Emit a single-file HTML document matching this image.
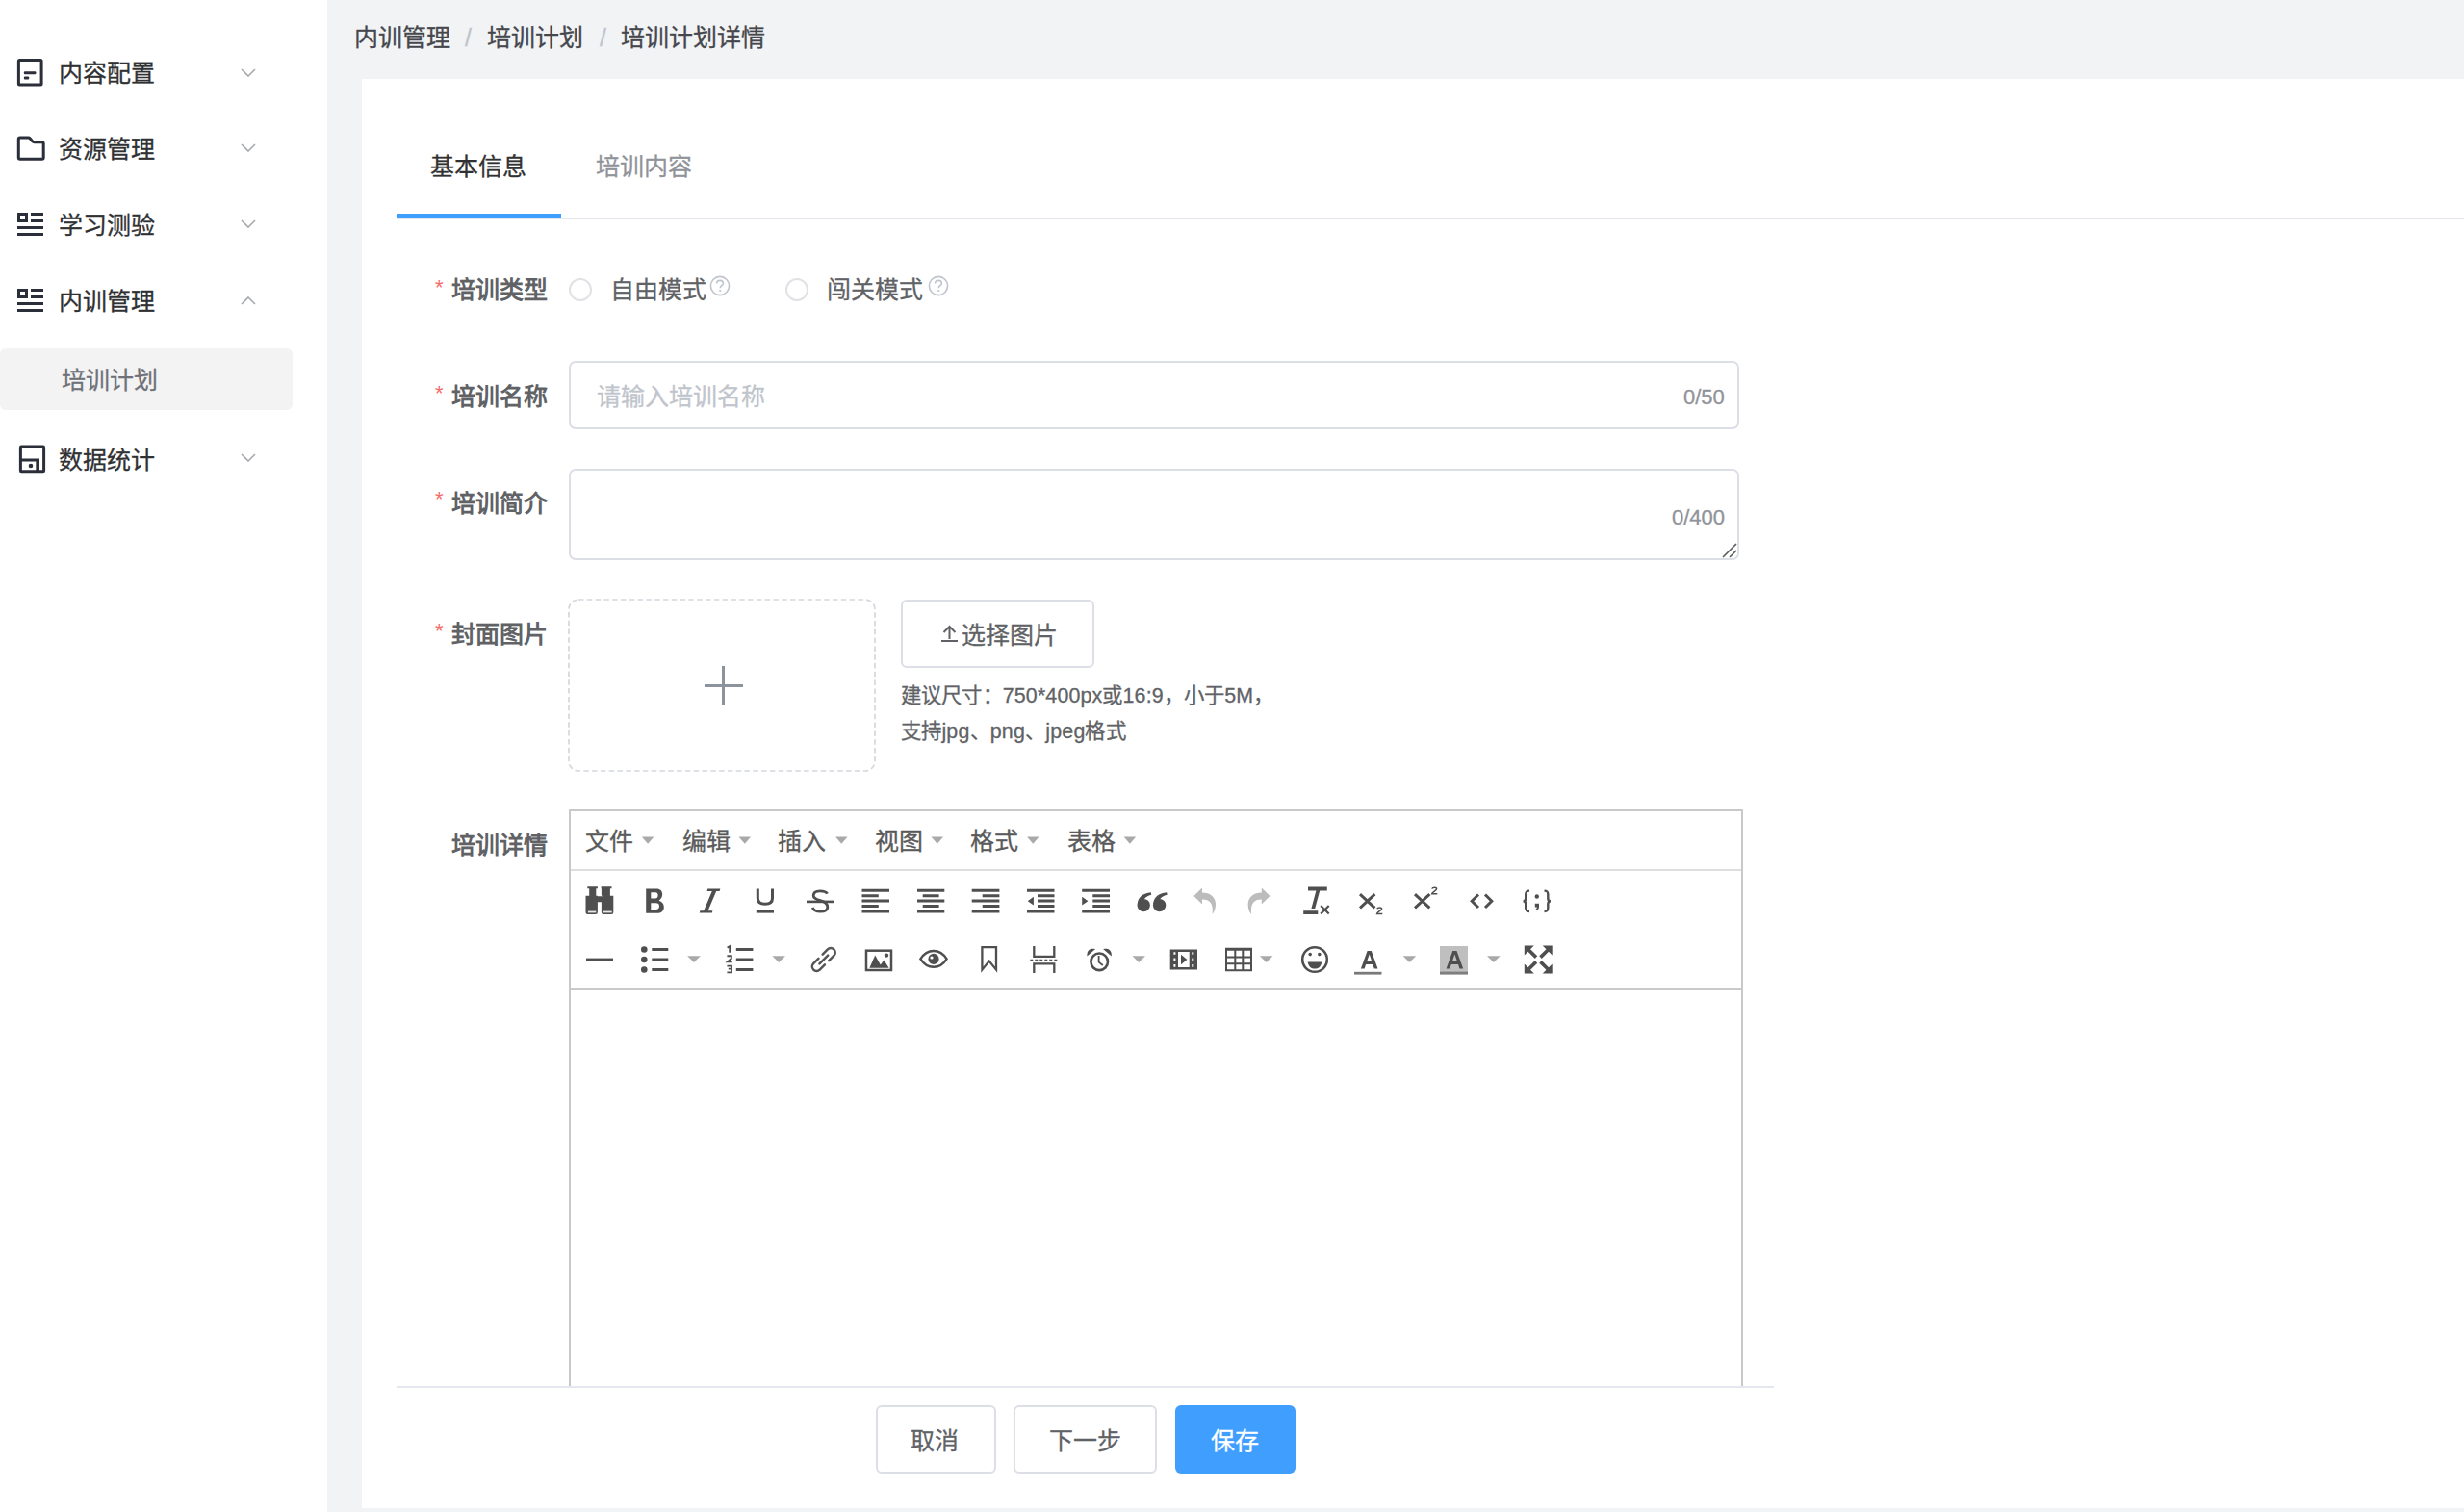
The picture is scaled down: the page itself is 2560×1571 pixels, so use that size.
<!DOCTYPE html>
<html lang="zh-CN"><head><meta charset="utf-8">
<style>
html,body{margin:0;padding:0;}
body{width:2560px;height:1571px;overflow:hidden;position:relative;background:#f2f3f5;font-family:"Liberation Sans",sans-serif;}
.a{position:absolute;}
.t{position:absolute;white-space:nowrap;font-size:25px;line-height:27px;-webkit-text-stroke:0.3px currentColor;}
#side{position:absolute;left:0;top:0;width:340px;height:1571px;background:#fff;}
#card{position:absolute;left:376px;top:82px;width:2184px;height:1485px;background:#fff;}
.nav{color:#303133;}
.chev{position:absolute;width:16px;height:9px;}
.lbl{font-weight:bold;color:#606266;-webkit-text-stroke:0;}
.req{position:absolute;color:#f56c6c;font-size:22px;line-height:22px;}
.inp{position:absolute;border:2px solid #dcdfe6;border-radius:7px;box-sizing:border-box;background:#fff;}
.btn{position:absolute;border:2px solid #dcdfe6;border-radius:6px;box-sizing:border-box;background:#fff;}
</style></head><body>

<!-- SIDEBAR -->
<div id="side">
  <!-- row1 -->
  <svg class="a" style="left:17px;top:60px" width="30" height="30" viewBox="0 0 30 30"><rect x="2.4" y="2.4" width="23.7" height="25.5" rx="1" fill="none" stroke="#2b2f3a" stroke-width="3"/><rect x="7.9" y="14.3" width="12.5" height="3" rx="1" fill="#2b2f3a"/><rect x="7.9" y="19.6" width="5.3" height="3" rx="1" fill="#2b2f3a"/></svg>
  <div class="t nav" style="left:61px;top:63px">内容配置</div>
  <svg class="chev" style="left:250px;top:71px" viewBox="0 0 16 9"><path d="M1 1 L8 8 L15 1" fill="none" stroke="#a6a9ad" stroke-width="1.6"/></svg>
  <!-- row2 -->
  <svg class="a" style="left:17px;top:140px" width="31" height="28" viewBox="0 0 31 28"><path d="M2.3 4.6 Q2.3 3.1 3.8 3.1 H12.5 Q13.5 3.1 14.4 4 L16.6 6.8 Q17.5 7.7 18.6 7.7 H26.7 Q28.2 7.7 28.2 9.2 V23.7 Q28.2 25.2 26.7 25.2 H3.8 Q2.3 25.2 2.3 23.7 Z" fill="none" stroke="#2b2f3a" stroke-width="3"/></svg>
  <div class="t nav" style="left:61px;top:142px">资源管理</div>
  <svg class="chev" style="left:250px;top:149px" viewBox="0 0 16 9"><path d="M1 1 L8 8 L15 1" fill="none" stroke="#a6a9ad" stroke-width="1.6"/></svg>
  <!-- row3 -->
  <svg class="a" style="left:17px;top:220px" width="30" height="27" viewBox="0 0 30 27"><rect x="2.5" y="2.5" width="8" height="7" fill="none" stroke="#2b2f3a" stroke-width="3"/><rect x="15" y="1" width="13" height="3" fill="#2b2f3a"/><rect x="15" y="8" width="13" height="3" fill="#2b2f3a"/><rect x="1" y="15" width="27" height="3" fill="#2b2f3a"/><rect x="1" y="22" width="27" height="3" fill="#2b2f3a"/></svg>
  <div class="t nav" style="left:61px;top:221px">学习测验</div>
  <svg class="chev" style="left:250px;top:228px" viewBox="0 0 16 9"><path d="M1 1 L8 8 L15 1" fill="none" stroke="#a6a9ad" stroke-width="1.6"/></svg>
  <!-- row4 -->
  <svg class="a" style="left:17px;top:299px" width="30" height="27" viewBox="0 0 30 27"><rect x="2.5" y="2.5" width="8" height="7" fill="none" stroke="#2b2f3a" stroke-width="3"/><rect x="15" y="1" width="13" height="3" fill="#2b2f3a"/><rect x="15" y="8" width="13" height="3" fill="#2b2f3a"/><rect x="1" y="15" width="27" height="3" fill="#2b2f3a"/><rect x="1" y="22" width="27" height="3" fill="#2b2f3a"/></svg>
  <div class="t nav" style="left:61px;top:300px">内训管理</div>
  <svg class="chev" style="left:250px;top:308px" viewBox="0 0 16 9"><path d="M1 8 L8 1 L15 8" fill="none" stroke="#a6a9ad" stroke-width="1.6"/></svg>
  <!-- submenu -->
  <div class="a" style="left:0;top:362px;width:304px;height:64px;background:#f3f3f3;border-radius:6px"></div>
  <div class="t" style="left:64px;top:382px;color:#6e7178">培训计划</div>
  <!-- row5 -->
  <svg class="a" style="left:19px;top:462px" width="30" height="30" viewBox="0 0 30 30"><rect x="2.4" y="2.1" width="24.2" height="25.6" rx="0.8" fill="none" stroke="#2b2f3a" stroke-width="3"/><path d="M2.4 16.1 H19.8 V27.7" fill="none" stroke="#2b2f3a" stroke-width="3"/><circle cx="13" cy="22" r="2.3" fill="#2b2f3a"/></svg>
  <div class="t nav" style="left:61px;top:465px">数据统计</div>
  <svg class="chev" style="left:250px;top:471px" viewBox="0 0 16 9"><path d="M1 1 L8 8 L15 1" fill="none" stroke="#a6a9ad" stroke-width="1.6"/></svg>
</div>

<!-- BREADCRUMB -->
<div class="t" style="left:368px;top:26px;color:#45474d">内训管理</div>
<div class="t" style="left:483px;top:26px;color:#c0c4cc">/</div>
<div class="t" style="left:506px;top:26px;color:#45474d">培训计划</div>
<div class="t" style="left:623px;top:26px;color:#c0c4cc">/</div>
<div class="t" style="left:645px;top:26px;color:#45474d">培训计划详情</div>

<!-- CARD -->
<div id="card"></div>

<!-- TABS -->
<div class="t" style="left:447px;top:160px;color:#303133">基本信息</div>
<div class="t" style="left:619px;top:160px;color:#909399">培训内容</div>
<div class="a" style="left:412px;top:226px;width:2148px;height:2px;background:#e4e7ed"></div>
<div class="a" style="left:412px;top:222px;width:171px;height:4px;background:#409eff"></div>

<!-- FORM -->
<!-- row1 type -->
<div class="req" style="left:452px;top:288px">*</div>
<div class="t lbl" style="left:469px;top:288px">培训类型</div>
<div class="a" style="left:591px;top:289px;width:24px;height:24px;border:2px solid #e0e2e6;border-radius:50%;box-sizing:border-box"></div>
<div class="t" style="left:634px;top:288px;color:#606266">自由模式</div>
<svg class="a" style="left:737px;top:286px" width="22" height="22" viewBox="0 0 22 22"><circle cx="11" cy="11" r="9.6" fill="none" stroke="#c0c4cc" stroke-width="1.6"/><path d="M7.6 8.6 C7.6 6.4 9.2 5.4 11 5.4 C12.9 5.4 14.4 6.6 14.4 8.4 C14.4 10.6 11.2 10.8 11.2 13.2" fill="none" stroke="#c0c4cc" stroke-width="1.6"/><circle cx="11.2" cy="16" r="1.1" fill="#c0c4cc"/></svg>
<div class="a" style="left:816px;top:289px;width:24px;height:24px;border:2px solid #e0e2e6;border-radius:50%;box-sizing:border-box"></div>
<div class="t" style="left:859px;top:288px;color:#606266">闯关模式</div>
<svg class="a" style="left:964px;top:286px" width="22" height="22" viewBox="0 0 22 22"><circle cx="11" cy="11" r="9.6" fill="none" stroke="#c0c4cc" stroke-width="1.6"/><path d="M7.6 8.6 C7.6 6.4 9.2 5.4 11 5.4 C12.9 5.4 14.4 6.6 14.4 8.4 C14.4 10.6 11.2 10.8 11.2 13.2" fill="none" stroke="#c0c4cc" stroke-width="1.6"/><circle cx="11.2" cy="16" r="1.1" fill="#c0c4cc"/></svg>

<!-- row2 name -->
<div class="req" style="left:452px;top:398px">*</div>
<div class="t lbl" style="left:469px;top:399px">培训名称</div>
<div class="inp" style="left:591px;top:375px;width:1216px;height:71px"></div>
<div class="t" style="left:620px;top:399px;color:#c0c4cc">请输入培训名称</div>
<div class="t" style="left:1749px;top:402px;font-size:22px;line-height:22px;color:#909399">0/50</div>

<!-- row3 intro -->
<div class="req" style="left:452px;top:508px">*</div>
<div class="t lbl" style="left:469px;top:510px">培训简介</div>
<div class="inp" style="left:591px;top:487px;width:1216px;height:95px"></div>
<div class="t" style="left:1737px;top:527px;font-size:22px;line-height:22px;color:#909399">0/400</div>
<svg class="a" style="left:1788px;top:563px" width="18" height="17" viewBox="0 0 18 17"><path d="M2 16 L16 2 M9 16 L16 9" stroke="#5a5a5a" stroke-width="1.6"/></svg>

<!-- row4 cover -->
<div class="req" style="left:452px;top:645px">*</div>
<div class="t lbl" style="left:469px;top:646px">封面图片</div>
<svg class="a" style="left:590px;top:622px" width="320" height="181"><rect x="1" y="1" width="318" height="178" rx="10" fill="#fff" stroke="#d4d7dd" stroke-width="1.7" stroke-dasharray="5.5 3.3"/></svg>
<div class="a" style="left:732px;top:711px;width:40px;height:3px;background:#8c939d"></div>
<div class="a" style="left:750px;top:692px;width:3px;height:41px;background:#8c939d"></div>
<div class="btn" style="left:936px;top:623px;width:201px;height:71px"></div>
<svg class="a" style="left:977px;top:647px" width="19" height="21" viewBox="0 0 19 21"><path d="M9.5 4 V17 M3.5 10 L9.5 4 L15.5 10" fill="none" stroke="#606266" stroke-width="2"/><rect x="1" y="18" width="17" height="2" fill="#606266"/></svg>
<div class="t" style="left:999px;top:647px;color:#606266">选择图片</div>
<div class="t" style="left:936px;top:713px;font-size:21.4px;line-height:21px;letter-spacing:0.15px;color:#606266">建议尺寸：750*400px或16:9，小于5M，</div>
<div class="t" style="left:936px;top:750px;font-size:21.4px;line-height:21px;letter-spacing:0.2px;color:#606266">支持jpg、png、jpeg格式</div>

<!-- row5 editor -->
<div class="t lbl" style="left:469px;top:865px">培训详情</div>
<div id="ed" class="a" style="left:591px;top:841px;width:1220px;height:600px;border:2px solid #c9c9c9;border-bottom:none;box-sizing:border-box;background:#fff"></div>
<div class="a" style="left:593px;top:903px;width:1216px;height:2px;background:#dedede"></div>
<div class="a" style="left:593px;top:1027px;width:1216px;height:2px;background:#c9c9c9"></div>
<div class="t" style="left:608px;top:861px;color:#5a5a5a">文件</div>
<div class="t" style="left:709px;top:861px;color:#5a5a5a">编辑</div>
<div class="t" style="left:808px;top:861px;color:#5a5a5a">插入</div>
<div class="t" style="left:909px;top:861px;color:#5a5a5a">视图</div>
<div class="t" style="left:1008px;top:861px;color:#5a5a5a">格式</div>
<div class="t" style="left:1109px;top:861px;color:#5a5a5a">表格</div>
<svg class="a" style="left:0;top:0" width="2560" height="1571" viewBox="0 0 2560 1571">
<g fill="#4f4f4f">
<!-- menubar carets -->
<path d="M666.8 869.5 H679.4 L673.1 876.8 Z M767.5 869.5 H780.1 L773.8 876.8 Z M868 869.5 H880.6 L874.3 876.8 Z M967.5 869.5 H980.1 L973.8 876.8 Z M1067 869.5 H1079.6 L1073.3 876.8 Z M1167.6 869.5 H1180.2 L1173.9 876.8 Z" fill="#a9a9a9"/>
<!-- binoculars -->
<path d="M610.3 921.3 H620.9 V923.3 H619.3 V930.8 H620.9 V931.3 H626.5 V930.8 H624.9 V923.3 H624.6 V921.3 H635.5 V923.3 H633.9 V930.8 H637.3 V948 Q637.3 950.1 635.3 950.1 H626.9 Q624.9 950.1 624.9 948 V937.2 H620.9 V948 Q620.9 950.1 618.9 950.1 H610.5 Q608.5 950.1 608.5 948 V930.8 H612.2 V923.3 H610.3 Z"/>
<rect x="610.9" y="946.6" width="8.4" height="1.8" fill="#e8e8e8"/>
<rect x="626.8" y="946.6" width="8.9" height="1.8" fill="#e8e8e8"/>
<!-- B -->
<path fill-rule="evenodd" d="M671.2 923.4 H682.2 C686 923.4 688.2 925.6 688.2 929.2 C688.2 932.2 686.6 934.2 684.6 935.8 C687.8 936.8 689.8 939.2 689.8 942.4 C689.8 946.6 687 948.8 682.6 948.8 H671.2 Z M676.3 927.3 H681 C682.8 927.3 683.6 928.4 683.6 930.3 C683.6 932.4 682.6 933.6 680.8 933.6 H676.3 Z M676.3 938.3 H681.6 C683.8 938.3 685 939.4 685 941.6 C685 943.8 683.8 945 681.6 945 H676.3 Z"/>
<!-- I -->
<path d="M735.2 923.6 H748.3 L747.6 926 H734.6 Z M727.4 946.2 H740.4 L739.8 948.6 H726.7 Z M739.8 926 H744.2 L735.6 946.2 H731.2 Z"/>
<!-- U -->
<path d="M787.3 923.6 V933.2 C787.3 937.6 790 939.3 794.9 939.3 C799.8 939.3 802.5 937.6 802.5 933.2 V923.6" fill="none" stroke="#4f4f4f" stroke-width="3"/>
<rect x="785.8" y="945.2" width="18.2" height="3.4"/>
<!-- S -->
<path d="M859.6 928.6 C858.2 926 855.4 925.8 852 925.8 C847.4 925.8 845.2 927.8 845.2 930.6 C845.2 933.6 847.8 934.6 852.2 935.6 C857.4 936.8 859.8 938.8 859.8 942.6 C859.8 945.8 857 947.2 852.2 947.2 C848.2 947.2 845.4 945.8 844.2 943" fill="none" stroke="#4f4f4f" stroke-width="2.8"/>
<rect x="838" y="935.6" width="28.5" height="2.6"/>
<!-- align left -->
<path d="M895.5 923.7 h28.5 v3 h-28.5 Z M895.5 929.2 h17.3 v3 h-17.3 Z M895.5 934.5 h28.5 v3 h-28.5 Z M895.5 940 h17.3 v3 h-17.3 Z M895.5 945.5 h28.5 v3 h-28.5 Z"/>
<!-- align center -->
<path d="M953 923.7 h28.3 v3 h-28.3 Z M958.7 929.2 h16.9 v3 h-16.9 Z M953 934.5 h28.3 v3 h-28.3 Z M958.7 940 h16.9 v3 h-16.9 Z M953 945.5 h28.3 v3 h-28.3 Z"/>
<!-- align right -->
<path d="M1009.7 923.7 h28.7 v3 h-28.7 Z M1020.7 929.2 h17.7 v3 h-17.7 Z M1009.7 934.5 h28.7 v3 h-28.7 Z M1020.7 940 h17.7 v3 h-17.7 Z M1009.7 945.5 h28.7 v3 h-28.7 Z"/>
<!-- outdent -->
<path d="M1067 923.7 h28.5 v3 h-28.5 Z M1078 929.2 h17.5 v3 h-17.5 Z M1078 934.5 h17.5 v3 h-17.5 Z M1078 940 h17.5 v3 h-17.5 Z M1067 945.5 h28.5 v3 h-28.5 Z M1067.7 936.2 L1073.9 931.8 V940.6 Z"/>
<!-- indent -->
<path d="M1124.2 923.7 h28.8 v3 h-28.8 Z M1135.3 929.2 h17.7 v3 h-17.7 Z M1135.3 934.5 h17.7 v3 h-17.7 Z M1135.3 940 h17.7 v3 h-17.7 Z M1124.2 945.5 h28.8 v3 h-28.8 Z M1130.4 936.2 L1124.2 931.8 V940.6 Z"/>
<!-- quote -->
<circle cx="1188.2" cy="940.6" r="6.7"/><circle cx="1204.6" cy="940.6" r="6.7"/>
<path d="M1181.8 939 C1182.4 932 1187.5 928 1195.8 927.2 L1196.2 929.8 C1191 931 1188.6 933.6 1188.4 936.5 Z M1198.2 939 C1198.8 932 1203.9 928 1212.2 927.2 L1212.6 929.8 C1207.4 931 1205 933.6 1204.8 936.5 Z"/>
<!-- undo / redo (disabled) -->
<path d="M1249 922.4 L1240.3 931 L1249 939.6 V934.6 C1256.5 934.4 1261 938.5 1259.6 950 C1265.2 943 1265.6 927.6 1249 927.4 Z" fill="#bcbcbc"/>
<path d="M1310.8 922.4 L1319.5 931 L1310.8 939.6 V934.6 C1303.3 934.4 1298.8 938.5 1300.2 950 C1294.6 943 1294.2 927.6 1310.8 927.4 Z" fill="#bcbcbc"/>
<!-- clear format -->
<path d="M1359 921.6 H1378.8 V925.4 H1371.2 L1366.2 944 H1362.4 L1367.4 925.4 H1359 Z M1354.2 946.2 H1369.3 V950 H1354.2 Z"/>
<path d="M1372.2 941 L1380.7 949.6 M1380.7 941 L1372.2 949.6" stroke="#4f4f4f" stroke-width="2.2" fill="none"/>
<!-- subscript -->
<path d="M1413 929.2 L1428.4 943.3 M1428.4 929.2 L1413 943.3" stroke="#4f4f4f" stroke-width="3" fill="none"/>
<path d="M1430.8 944.2 C1431.3 942.6 1435.6 942.4 1435.6 944.4 C1435.6 946 1431 947.4 1430.6 949.4 H1436.3" stroke="#4f4f4f" stroke-width="1.5" fill="none"/>
<!-- superscript -->
<path d="M1470 929.2 L1485.4 943.3 M1485.4 929.2 L1470 943.3" stroke="#4f4f4f" stroke-width="3" fill="none"/>
<path d="M1487.8 923.6 C1488.3 922 1492.6 921.8 1492.6 923.8 C1492.6 925.4 1488 926.8 1487.6 928.8 H1493.3" stroke="#4f4f4f" stroke-width="1.5" fill="none"/>
<!-- code -->
<path d="M1536 929.5 L1529.2 936.2 L1536 943 M1543 929.5 L1549.8 936.2 L1543 943" stroke="#4f4f4f" stroke-width="3" fill="none"/>
<!-- codesample {;} -->
<path d="M1589 925.6 C1585.6 925.6 1585.2 927 1585.2 929.6 V933.4 C1585.2 935.2 1584.4 936.2 1582.6 936.3 C1584.4 936.4 1585.2 937.4 1585.2 939.2 V943 C1585.2 945.6 1585.6 947 1589 947 M1604.5 925.6 C1607.9 925.6 1608.3 927 1608.3 929.6 V933.4 C1608.3 935.2 1609.1 936.2 1610.9 936.3 C1609.1 936.4 1608.3 937.4 1608.3 939.2 V943 C1608.3 945.6 1607.9 947 1604.5 947" stroke="#4f4f4f" stroke-width="2.4" fill="none"/>
<circle cx="1596.8" cy="931.5" r="2.2"/>
<path d="M1594.8 938.8 H1599 V942 C1599 944 1598 945.6 1596 946.2 L1595.4 945 C1596.4 944.4 1596.8 943.6 1596.8 942.6 H1594.8 Z"/>

<!-- ROW 2 -->
<rect x="609" y="995.6" width="28" height="3.4"/>
<!-- bullist -->
<circle cx="669.3" cy="986.5" r="3.3"/><circle cx="669.3" cy="997" r="3.3"/><circle cx="669.3" cy="1007.5" r="3.3"/>
<path d="M677.3 985.1 h17 v2.8 h-17 Z M677.3 995.6 h17 v2.8 h-17 Z M677.3 1006.1 h17 v2.8 h-17 Z"/>
<path d="M714.2 993.3 H727.8 L721 1000 Z" fill="#a9a9a9"/>
<!-- numlist -->
<path d="M764.8 985.1 h17.6 v2.8 h-17.6 Z M764.8 995.6 h17.6 v2.8 h-17.6 Z M764.8 1006.1 h17.6 v2.8 h-17.6 Z"/>
<path d="M755.6 984.6 L758.2 983.2 V989.8 M755.4 993.2 H759.8 V996 L756 999.2 H760.8 M755.4 1003.6 H760 V1006.6 H756.8 M760 1006.3 V1010.4 H755.4" stroke="#4f4f4f" stroke-width="1.9" fill="none"/>
<path d="M802.3 993.3 H816 L809.2 1000 Z" fill="#a9a9a9"/>
<!-- link -->
<g transform="translate(855.8 997) rotate(-45)" fill="none" stroke="#555" stroke-width="2.5" stroke-linecap="round">
<path d="M-3 -4.6 H-10.4 A4.6 4.6 0 0 0 -10.4 4.6 H-3 M3 4.6 H10.4 A4.6 4.6 0 0 0 10.4 -4.6 H3 M-6.2 0 H6.2"/>
</g>
<!-- image -->
<rect x="900" y="987.7" width="26" height="20.3" fill="none" stroke="#4f4f4f" stroke-width="2.5"/>
<path d="M903.4 1005.8 L909.2 992.6 L914.8 1002.4 L918.4 997.4 L923.6 1005.8 Z"/>
<circle cx="921" cy="992.6" r="2.2"/>
<!-- eye -->
<path d="M956.4 996.4 C960 990.6 965 988 970 988 C975 988 980 990.6 983.6 996.4 C980 1002.2 975 1004.8 970 1004.8 C965 1004.8 960 1002.2 956.4 996.4 Z" fill="none" stroke="#4f4f4f" stroke-width="2.4"/>
<circle cx="970" cy="996.4" r="5.6"/>
<circle cx="968" cy="995" r="1.6" fill="#fff"/>
<!-- bookmark -->
<path d="M1020.4 984.2 H1035 V1007.6 L1027.7 998.6 L1020.4 1007.6 Z" fill="none" stroke="#4f4f4f" stroke-width="2.3"/>
<!-- pagebreak -->
<path d="M1074.3 983 V993.8 H1095.3 V983 M1074.3 1011 V1001.3 H1095.3 V1011" fill="none" stroke="#4f4f4f" stroke-width="2.3"/>
<path d="M1070.3 997.8 H1098.8" stroke="#4f4f4f" stroke-width="2.3" stroke-dasharray="3 2"/>
<!-- alarm -->
<circle cx="1142.2" cy="999.3" r="8.8" fill="none" stroke="#4f4f4f" stroke-width="2.6"/>
<path d="M1141.6 993 V999.6 L1145.8 1003" fill="none" stroke="#4f4f4f" stroke-width="1.8"/>
<path d="M1130.4 991.4 C1130.4 988 1133 986.4 1135.8 986.8 Z M1153.8 991.4 C1153.8 988 1151.2 986.4 1148.4 986.8 Z" stroke="#4f4f4f" stroke-width="2" />
<path d="M1176.5 993.3 H1190 L1183.2 1000 Z" fill="#a9a9a9"/>
<!-- media -->
<path fill-rule="evenodd" d="M1215.7 986.5 H1244 V1007.5 H1215.7 Z M1219.4 989.2 H1221.4 V991.8 H1219.4 Z M1219.4 995.6 H1221.4 V998.4 H1219.4 Z M1219.4 1002 H1221.4 V1004.8 H1219.4 Z M1238.3 989.2 H1240.3 V991.8 H1238.3 Z M1238.3 995.6 H1240.3 V998.4 H1238.3 Z M1238.3 1002 H1240.3 V1004.8 H1238.3 Z M1224 989 H1235.7 V1005 H1224 Z"/>
<path d="M1227 991.8 L1233.4 997 L1227 1002.2 Z"/>
<!-- table -->
<path fill-rule="evenodd" d="M1273 984.8 H1301 V1009.2 H1273 Z M1275 987.8 H1282.3 V993.4 H1275 Z M1284.3 987.8 H1290.3 V993.4 H1284.3 Z M1292.3 987.8 H1299 V993.4 H1292.3 Z M1275 995.4 H1282.3 V1000.3 H1275 Z M1284.3 995.4 H1290.3 V1000.3 H1284.3 Z M1292.3 995.4 H1299 V1000.3 H1292.3 Z M1275 1002.3 H1282.3 V1007.2 H1275 Z M1284.3 1002.3 H1290.3 V1007.2 H1284.3 Z M1292.3 1002.3 H1299 V1007.2 H1292.3 Z"/>
<path d="M1308.9 993.3 H1322.5 L1315.7 1000 Z" fill="#a9a9a9"/>
<!-- emoticons -->
<circle cx="1366" cy="997" r="12.8" fill="none" stroke="#4f4f4f" stroke-width="2.6"/>
<circle cx="1361.2" cy="991.6" r="1.8"/><circle cx="1370.8" cy="991.6" r="1.8"/>
<path d="M1358.6 999.4 C1359.6 1004.6 1362.4 1006.4 1366 1006.4 C1369.6 1006.4 1372.4 1004.6 1373.4 999.4 Z"/>
<!-- forecolor -->
<path d="M1413.9 1006.4 L1420.6 988 H1424.8 L1431.5 1006.4 H1427.8 L1426.3 1002 H1419.1 L1417.6 1006.4 Z M1420.2 998.8 H1425.2 L1422.7 991.4 Z" fill-rule="evenodd"/>
<rect x="1407" y="1009.8" width="28.5" height="2.8" fill="#7a7a7a"/>
<path d="M1457.6 993.3 H1471.2 L1464.4 1000 Z" fill="#a9a9a9"/>
<!-- backcolor -->
<rect x="1496" y="983" width="29" height="27" fill="#bfbfbf"/>
<rect x="1496" y="1009.6" width="29" height="3" fill="#7f7f7f"/>
<path d="M1502.6 1006.4 L1509.3 988 H1513.5 L1520.2 1006.4 H1516.5 L1515 1002 H1507.8 L1506.3 1006.4 Z M1508.9 998.8 H1513.9 L1511.4 991.4 Z" fill-rule="evenodd"/>
<path d="M1545 993.3 H1558.7 L1551.9 1000 Z" fill="#a9a9a9"/>
<!-- fullscreen -->
<path d="M1583.8 982.5 H1593.8 L1583.8 992.5 Z M1612.7 982.5 H1602.7 L1612.7 992.5 Z M1583.8 1011.5 H1593.8 L1583.8 1001.5 Z M1612.7 1011.5 H1602.7 L1612.7 1001.5 Z"/>
<path d="M1587.5 986.2 L1596 994.6 M1609 986.2 L1600.5 994.6 M1587.5 1007.8 L1596 999.4 M1609 1007.8 L1600.5 999.4" stroke="#4f4f4f" stroke-width="3.6" fill="none"/>
</g>
</svg>

<!-- FOOTER -->
<div class="a" style="left:412px;top:1440px;width:1431px;height:2px;background:#e4e7ed"></div>
<div class="btn" style="left:910px;top:1460px;width:125px;height:71px"></div>
<div class="t" style="left:946px;top:1484px;color:#606266">取消</div>
<div class="btn" style="left:1053px;top:1460px;width:149px;height:71px"></div>
<div class="t" style="left:1090px;top:1484px;color:#606266">下一步</div>
<div class="a" style="left:1221px;top:1460px;width:125px;height:71px;background:#409eff;border-radius:6px"></div>
<div class="t" style="left:1258px;top:1484px;color:#fff">保存</div>

</body></html>
